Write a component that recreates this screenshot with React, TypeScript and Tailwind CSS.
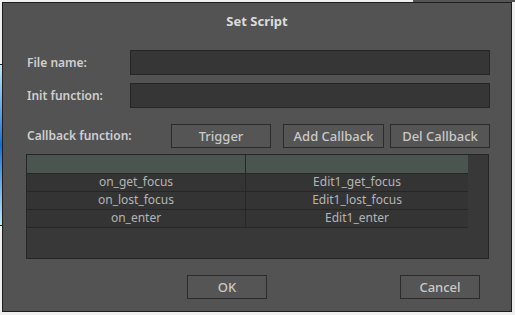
import React from "react";

const rows = [
  ["on_get_focus", "Edit1_get_focus"],
  ["on_lost_focus", "Edit1_lost_focus"],
  ["on_enter", "Edit1_enter"],
];

function Btn({ label, className = "" }: { label: string; className?: string }) {
  return (
    <button
      className={`h-[24px] border border-[#2b2b2b] bg-[#555555] text-[13px] font-medium text-[#c9c9c9] leading-none ${className}`}
    >
      {label}
    </button>
  );
}

export default function App() {
  return (
    <div
      className="relative w-[515px] h-[315px] overflow-hidden bg-[#f0f0f0] pt-[2px] pl-[2px]"
      style={{ fontFamily: '"Noto Sans", "Open Sans", sans-serif' }}
    >
      {/* bits of the window behind the dialog */}
      <div className="absolute left-0 top-[64px] w-[2px] h-[162px] border-y border-[#222] bg-gradient-to-b from-[#bfe6f5] via-[#0a6fd8] to-[#bfe6f5]" />
      <div className="absolute left-[413px] top-0 w-[102px] h-[2px] bg-[#555]" />

      <div className="flex flex-col w-[510px] h-[310px] border border-[#1e1e1e] bg-[#535353]">
        <div className="h-[37px] flex items-center justify-center text-[13px] font-bold text-[#dcdcdc]">
          Set Script
        </div>

        <div className="mt-[10px] pl-[24px] pr-[21px] flex flex-col gap-[8px]">
          <div className="flex items-center">
            <span className="w-[103px] text-[12px] font-semibold text-[#cfcfcf]">File name:</span>
            <div className="flex-1 h-[25px] border border-[#262626] bg-[#363636]" />
          </div>
          <div className="flex items-center">
            <span className="w-[103px] text-[12px] font-semibold text-[#cfcfcf]">Init function:</span>
            <div className="flex-1 h-[25px] border border-[#262626] bg-[#363636]" />
          </div>
        </div>

        <div className="mt-[16px] pl-[24px] flex items-center">
          <span className="w-[144px] text-[12px] font-semibold text-[#cfcfcf]">Callback function:</span>
          <Btn label="Trigger" className="w-[100px]" />
          <Btn label="Add Callback" className="w-[101px] ml-[12px]" />
          <Btn label="Del Callback" className="w-[100px] ml-[6px]" />
        </div>

        <div className="mt-[6px] ml-[23px] w-[463px] h-[105px] border border-[#262626] bg-[#383838]">
          <div className="w-[441px]">
            <div className="grid grid-cols-[219px_1fr] h-[19px] bg-[#4a554f] border-b border-[#262626]">
              <div className="border-r border-[#262626]" />
              <div />
            </div>
            {rows.map(([a, b]) => (
              <div
                key={a}
                className="grid grid-cols-[219px_1fr] h-[18px] bg-[#343434] border-b border-[#262626] text-[12px] text-[#b4b4b4] leading-[16px]"
              >
                <div className="border-r border-[#262626] text-center">{a}</div>
                <div className="text-center">{b}</div>
              </div>
            ))}
          </div>
        </div>

        <div className="mt-[16px] flex">
          <Btn label="OK" className="ml-[184px] w-[80px] font-bold" />
          <Btn label="Cancel" className="ml-[133px] w-[80px]" />
        </div>
      </div>
    </div>
  );
}
